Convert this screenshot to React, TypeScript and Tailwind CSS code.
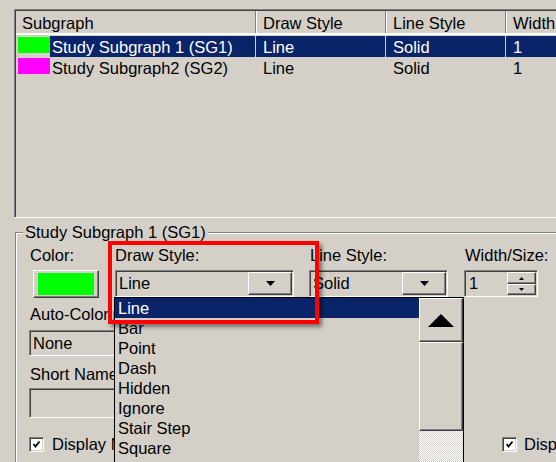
const sunken =
  "border border-t-[#808080] border-l-[#808080] border-b-white border-r-white p-[1px] shadow-[inset_1px_1px_0_#404040,inset_-1px_-1px_0_#d4d0c8]";
const raised =
  "border border-t-white border-l-white border-b-[#404040] border-r-[#404040] shadow-[inset_-1px_-1px_0_#808080]";

function DownArrow() {
  return (
    <svg width="9" height="5" viewBox="0 0 9 5">
      <polygon points="0,0 9,0 4.5,5" fill="#000" />
    </svg>
  );
}

function Combo({ value, className }: { value: string; className: string }) {
  return (
    <div className={`${sunken} flex ${className}`}>
      <div className="flex-1 pl-[2px] leading-[23px] whitespace-nowrap overflow-hidden">{value}</div>
      <div className={`${raised} w-[44px] flex items-center justify-center`}>
        <DownArrow />
      </div>
    </div>
  );
}

function Check() {
  return (
    <div className={`${sunken} w-[15px] h-[15px] shrink-0 bg-white flex items-center justify-center`}>
      <svg width="11" height="11" viewBox="0 0 11 11">
        <polyline points="2.5,5 4.5,7.5 8.5,2.5" fill="none" stroke="#000" strokeWidth="1.8" />
      </svg>
    </div>
  );
}

const rows = [
  { color: "bg-[#00ff00]", name: "Study Subgraph 1 (SG1)", draw: "Line", line: "Solid", width: "1", selected: true },
  { color: "bg-[#ff00ff]", name: "Study Subgraph2 (SG2)", draw: "Line", line: "Solid", width: "1", selected: false },
];

const drawStyles = ["Line", "Bar", "Point", "Dash", "Hidden", "Ignore", "Stair Step", "Square"];

export default function App() {
  return (
    <div className="relative w-[556px] h-[462px] overflow-hidden bg-[#d4d0c8] text-black text-[16.5px] font-['Liberation_Sans',Arial,sans-serif]">
      {/* subgraph list */}
      <div className="ml-[14px] mt-[9px] w-[620px] h-[209px] border-t border-l border-t-[#808080] border-l-[#808080] border-b border-b-white pt-[1px] pl-[1px] shadow-[inset_1px_1px_0_#404040]">
        <div className="flex h-[24px] border-b-2 border-b-white">
          <div className="w-[239px] pl-[6px] pt-[2px] leading-[20px]">Subgraph</div>
          <div className="w-[130px] border-l border-l-[#808080] shadow-[inset_1px_0_0_#fff] pl-[7px] pt-[2px] leading-[20px]">Draw Style</div>
          <div className="w-[120px] border-l border-l-[#808080] shadow-[inset_1px_0_0_#fff] pl-[7px] pt-[2px] leading-[20px]">Line Style</div>
          <div className="flex-1 border-l border-l-[#808080] shadow-[inset_1px_0_0_#fff] pl-[7px] pt-[2px] leading-[20px]">Width</div>
        </div>
        <div className="pt-[1px]">
          {rows.map((r) => {
            const sel = r.selected ? "bg-[#0a246a] text-white" : "";
            return (
              <div key={r.name} className="flex h-[21px]">
                <div className="w-[239px] flex">
                  <div className={`ml-[2px] mt-[1px] w-[32px] h-[16px] ${r.color}`} />
                  <div className={`flex-1 pl-[2px] pt-[1px] leading-[20px] whitespace-nowrap ${sel}`}>{r.name}</div>
                </div>
                <div className={`w-[130px] border-l border-l-[#d4d0c8] pl-[7px] pt-[1px] leading-[20px] ${sel}`}>{r.draw}</div>
                <div className={`w-[120px] border-l border-l-[#d4d0c8] pl-[7px] pt-[1px] leading-[20px] ${sel}`}>{r.line}</div>
                <div className={`flex-1 border-l border-l-[#d4d0c8] pl-[7px] pt-[1px] leading-[20px] ${sel}`}>{r.width}</div>
              </div>
            );
          })}
        </div>
      </div>

      {/* group box */}
      <div className="ml-[15px] mt-[14px] w-[620px] h-[240px] border-t border-l border-[#808080] shadow-[inset_1px_1px_0_#fff]">
        <div className="-mt-[10px] ml-[7px] w-fit bg-[#d4d0c8] px-[2px] leading-[18px]">Study Subgraph 1 (SG1)</div>
        <div className="pl-[13px] pt-[4px]">
          <div className="flex items-start">
            <div className="w-[86px] shrink-0">
              <div className="pl-[1px] leading-[20px]">Color:</div>
              <div className={`${raised} mt-[5px] ml-[4px] w-[66px] h-[28px] px-[4px] py-[2px]`}>
                <div className="w-full h-full bg-[#00ff00]" />
              </div>
            </div>
            <div className="w-[194px] shrink-0">
              <div className="leading-[20px]">Draw Style:</div>
              <Combo value="Line" className="mt-[5px] w-[179px] h-[27px]" />
            </div>
            <div className="w-[155px] shrink-0">
              <div className="pl-[1px] leading-[20px]">Line Style:</div>
              <Combo value="Solid" className="mt-[5px] w-[139px] h-[27px]" />
            </div>
            <div className="shrink-0">
              <div className="pl-[1px] leading-[20px] whitespace-nowrap">Width/Size:</div>
              <div className={`${sunken} mt-[5px] w-[74px] h-[27px] flex`}>
                <div className="flex-1 pl-[3px] leading-[23px]">1</div>
                <div className="w-[29px] flex flex-col">
                  <div className={`${raised} h-[12px] flex items-center justify-center`}>
                    <svg width="5" height="3" viewBox="0 0 5 3">
                      <polygon points="2.5,0 5,3 0,3" fill="#000" />
                    </svg>
                  </div>
                  <div className={`${raised} h-[11px] flex items-center justify-center`}>
                    <svg width="5" height="3" viewBox="0 0 5 3">
                      <polygon points="0,0 5,0 2.5,3" fill="#000" />
                    </svg>
                  </div>
                </div>
              </div>
            </div>
          </div>

          <div className="mt-[6px] pl-[1px] leading-[20px]">Auto-Coloring:</div>
          <div className={`${sunken} mt-[6px] w-[180px] h-[26px] pl-[3px] leading-[22px]`}>None</div>
          <div className="mt-[8px] pl-[1px] leading-[20px]">Short Name:</div>
          <div className={`${sunken} mt-[4px] w-[180px] h-[30px]`} />

          <div className="mt-[16px] flex items-center h-[20px] whitespace-nowrap">
            <div className="w-[473px] shrink-0 flex items-center gap-[8px]">
              <Check />
              <span className="leading-[20px]">Display Name</span>
            </div>
            <div className="shrink-0 flex items-center gap-[7px]">
              <Check />
              <span className="leading-[20px]">Display Value</span>
            </div>
          </div>
        </div>
      </div>

      {/* open drop-down list */}
      <div className="absolute left-[114px] top-[297px] w-[350px] h-[200px] border border-black bg-[#d4d0c8] flex">
        <div className="w-[304px] flex flex-col">
          {drawStyles.map((s, i) => (
            <div
              key={s}
              className={`h-[20px] shrink-0 pl-[3px] leading-[20px] ${i === 0 ? "bg-[#0a246a] text-white" : ""}`}
            >
              {s}
            </div>
          ))}
        </div>
        <div className="w-[44px] flex flex-col">
          <div className={`${raised} h-[44px] shrink-0 flex items-center justify-center`}>
            <svg width="26" height="13" viewBox="0 0 26 13">
              <polygon points="13,0 26,13 0,13" fill="#000" />
            </svg>
          </div>
          <div className={`${raised} h-[89px] shrink-0`} />
          <div className="flex-1 bg-[image:repeating-conic-gradient(#ffffff_0_25%,#d4d0c8_0_50%)] bg-[length:2px_2px]" />
        </div>
      </div>

      {/* red highlight frame */}
      <div className="absolute left-[108px] top-[241px] w-[211px] h-[83px] border-[4px] border-[#ff0000] shadow-[3px_3px_4px_rgba(0,0,0,0.45)]" />
    </div>
  );
}
